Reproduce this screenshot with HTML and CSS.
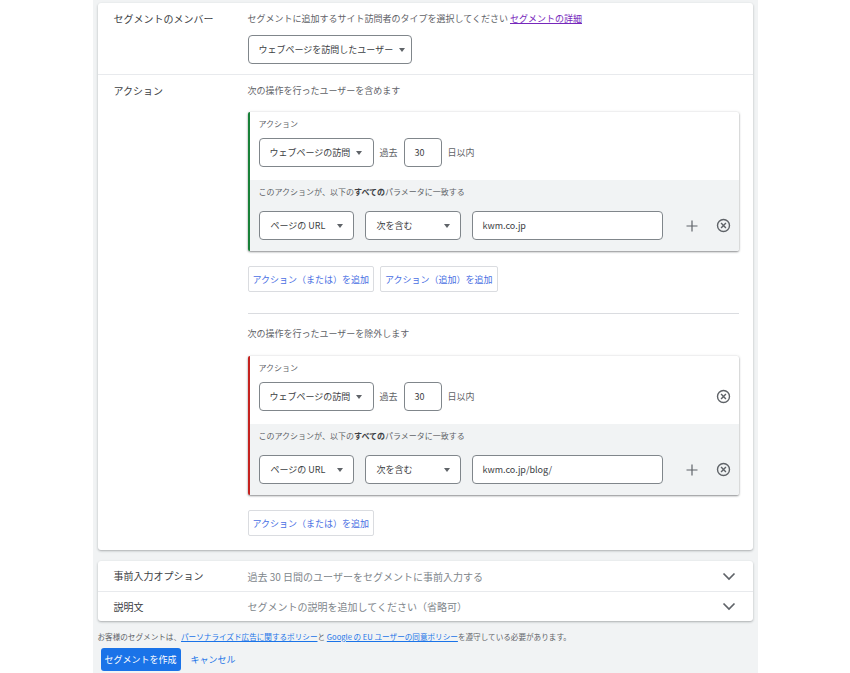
FILE: index.html
```html
<!DOCTYPE html>
<html>
<head>
<meta charset="utf-8">
<title>セグメントを作成</title>
<link rel="stylesheet" href="styles.css">
</head>
<body>
<div class="page">
    <div class="card main-card">
        <div class="section section-member">
            <div class="section-label">セグメントのメンバー</div>
            <div class="section-body">
                <div class="hint">セグメントに追加するサイト訪問者のタイプを選択してください <a class="link-visited" href="#">セグメントの詳細</a></div>
                <div class="dropdown dropdown-member">ウェブページを訪問したユーザー<span class="caret"></span></div>
            </div>
        </div>

        <div class="section section-actions">
            <div class="section-label">アクション</div>
            <div class="section-body">
                <div class="hint">次の操作を行ったユーザーを含めます</div>

                <div class="action-card include">
                    <div class="action-top">
                        <div class="mini-label">アクション</div>
                        <div class="action-row">
                            <div class="dropdown">ウェブページの訪問<span class="caret"></span></div>
                            <span class="inline-text">過去</span>
                            <div class="field field-days">30</div>
                            <span class="inline-text">日以内</span>
                        </div>
                    </div>
                    <div class="action-params">
                        <div class="mini-label">このアクションが、以下の<b>すべての</b>パラメータに一致する</div>
                        <div class="param-row">
                            <div class="dropdown select-param">ページの URL<span class="caret"></span></div>
                            <div class="dropdown select-match">次を含む<span class="caret"></span></div>
                            <div class="field field-value">kwm.co.jp</div>
                            <span class="icon-btn icon-plus">
                                <svg width="12" height="12" viewBox="0 0 12 12"><path d="M6 .5v11M.5 6h11" stroke="#5f6368" stroke-width="1.2" fill="none"/></svg>
                            </span>
                            <span class="icon-btn">
                                <svg width="15" height="15" viewBox="0 0 16 16"><circle cx="8" cy="8" r="6.4" fill="none" stroke="#5f6368" stroke-width="1.5"/><path d="M5.4 5.4l5.2 5.2M10.6 5.4l-5.2 5.2" stroke="#5f6368" stroke-width="1.5" fill="none"/></svg>
                            </span>
                        </div>
                    </div>
                </div>

                <div class="button-group">
                    <button class="btn-outline">アクション（または）を追加</button>
                    <button class="btn-outline">アクション（追加）を追加</button>
                </div>

                <div class="divider"></div>

                <div class="hint hint-exclude">次の操作を行ったユーザーを除外します</div>

                <div class="action-card exclude">
                    <div class="action-top">
                        <div class="mini-label">アクション</div>
                        <div class="action-row">
                            <div class="dropdown">ウェブページの訪問<span class="caret"></span></div>
                            <span class="inline-text">過去</span>
                            <div class="field field-days">30</div>
                            <span class="inline-text">日以内</span>
                            <span class="icon-btn icon-push">
                                <svg width="15" height="15" viewBox="0 0 16 16"><circle cx="8" cy="8" r="6.4" fill="none" stroke="#5f6368" stroke-width="1.5"/><path d="M5.4 5.4l5.2 5.2M10.6 5.4l-5.2 5.2" stroke="#5f6368" stroke-width="1.5" fill="none"/></svg>
                            </span>
                        </div>
                    </div>
                    <div class="action-params">
                        <div class="mini-label">このアクションが、以下の<b>すべての</b>パラメータに一致する</div>
                        <div class="param-row">
                            <div class="dropdown select-param">ページの URL<span class="caret"></span></div>
                            <div class="dropdown select-match">次を含む<span class="caret"></span></div>
                            <div class="field field-value">kwm.co.jp/blog/</div>
                            <span class="icon-btn icon-plus">
                                <svg width="12" height="12" viewBox="0 0 12 12"><path d="M6 .5v11M.5 6h11" stroke="#5f6368" stroke-width="1.2" fill="none"/></svg>
                            </span>
                            <span class="icon-btn">
                                <svg width="15" height="15" viewBox="0 0 16 16"><circle cx="8" cy="8" r="6.4" fill="none" stroke="#5f6368" stroke-width="1.5"/><path d="M5.4 5.4l5.2 5.2M10.6 5.4l-5.2 5.2" stroke="#5f6368" stroke-width="1.5" fill="none"/></svg>
                            </span>
                        </div>
                    </div>
                </div>

                <div class="button-group">
                    <button class="btn-outline">アクション（または）を追加</button>
                </div>
            </div>
        </div>
    </div>

    <div class="card options-card">
        <div class="collapse-row">
            <div class="section-label">事前入力オプション</div>
            <div class="collapse-text">過去 30 日間のユーザーをセグメントに事前入力する</div>
            <svg class="chevron" width="14" height="9" viewBox="0 0 14 9"><path d="M1.5 1.5L7 7l5.5-5.5" fill="none" stroke="#5f6368" stroke-width="1.7"/></svg>
        </div>
        <div class="collapse-row">
            <div class="section-label">説明文</div>
            <div class="collapse-text">セグメントの説明を追加してください（省略可）</div>
            <svg class="chevron" width="14" height="9" viewBox="0 0 14 9"><path d="M1.5 1.5L7 7l5.5-5.5" fill="none" stroke="#5f6368" stroke-width="1.7"/></svg>
        </div>
    </div>

    <div class="policy">お客様のセグメントは、<a href="#">パーソナライズド広告に関するポリシー</a>と <a href="#">Google の EU ユーザーの同意ポリシー</a>を遵守している必要があります。</div>

    <div class="footer-actions">
        <button class="btn-primary">セグメントを作成</button>
        <button class="btn-text">キャンセル</button>
    </div>
</div>
</body>
</html>
```

FILE: styles.css
```css
body {
    margin: 0;
    background-color: #fff;
    font-family: "Noto Sans CJK JP", "Noto Sans", sans-serif;
    color: #3c4043;
}

.page {
    width: 665px;
    min-height: 100vh;
    margin: 0 auto;
    padding: 3px 5px 0;
    box-sizing: border-box;
    background-color: #f1f3f4;
}

.card {
    background-color: #fff;
    border-radius: 3px;
    box-shadow: 0 1px 2px rgba(60, 64, 67, 0.3), 0 1px 3px rgba(60, 64, 67, 0.1);
}

.section {
    display: flex;
    padding: 9px 14px 10px 16px;
}

.section-member {
    border-bottom: 1px solid #e8eaed;
}

.section-actions {
    padding-bottom: 14px;
}

.section-label {
    width: 134px;
    flex-shrink: 0;
    font-size: 10px;
    line-height: 14px;
    color: #3c4043;
}

.section-body {
    flex: 1;
    min-width: 0;
}

.hint {
    font-size: 9px;
    line-height: 14px;
    color: #5f6368;
}

.link-visited {
    color: #7627bb;
    text-decoration: underline;
}

.hint-exclude {
    margin-top: 13px;
}

.dropdown {
    display: inline-flex;
    align-items: center;
    box-sizing: border-box;
    height: 29px;
    padding: 0 10px;
    border: 1px solid #80868b;
    border-radius: 4px;
    font-size: 9px;
    color: #3c4043;
    background-color: #fff;
    white-space: nowrap;
}

.dropdown-member {
    margin-top: 9px;
    width: 164px;
    padding-right: 7px;
}

.caret {
    display: inline-block;
    width: 0;
    height: 0;
    margin-left: 6px;
    border-left: 3.5px solid transparent;
    border-right: 3.5px solid transparent;
    border-top: 4px solid #5f6368;
}

.action-card {
    margin-top: 14px;
    border-left: 2px solid #188038;
    border-radius: 2px;
    background-color: #fff;
    box-shadow: 0 1px 2px rgba(60, 64, 67, 0.55), 0 0 3px rgba(60, 64, 67, 0.15);
    overflow: hidden;
}

.action-card.exclude {
    margin-top: 15px;
    border-left-color: #c5221f;
}

.action-top {
    padding: 6px 3px 13px 9px;
}

.action-params {
    padding: 6px 3px 11px 9px;
    background-color: #f1f3f4;
}

.mini-label {
    font-size: 8px;
    line-height: 12px;
    color: #5f6368;
}

.mini-label b {
    color: #3c4043;
}

.action-row,
.param-row {
    display: flex;
    align-items: center;
}

.action-row {
    margin-top: 8px;
}

.param-row {
    margin-top: 13px;
}

.action-row .dropdown {
    width: 115px;
}

.inline-text {
    margin: 0 6px;
    font-size: 9px;
    color: #5f6368;
}

.field {
    display: flex;
    align-items: center;
    box-sizing: border-box;
    height: 29px;
    padding: 0 10px;
    border: 1px solid #80868b;
    border-radius: 4px;
    font-size: 9px;
    color: #3c4043;
    background-color: #fff;
}

.field-days {
    width: 38px;
}

.select-param,
.select-match {
    justify-content: space-between;
    padding-left: 11px;
}

.select-param {
    width: 95px;
}

.select-match {
    width: 96px;
    margin-left: 11px;
}

.field-value {
    width: 191px;
    margin-left: 11px;
}

.icon-btn {
    display: flex;
    align-items: center;
    justify-content: center;
    width: 24px;
    height: 24px;
}

.icon-plus {
    margin-left: 17px;
    margin-right: 8px;
}

.icon-push {
    margin-left: auto;
}

.button-group {
    display: flex;
    gap: 6px;
    margin-top: 15px;
}

.btn-outline {
    height: 26px;
    padding: 0 4px;
    border: 1px solid #dadce0;
    border-radius: 2px;
    background-color: #fff;
    font-family: inherit;
    font-size: 9px;
    color: #4a6fe3;
}

.divider {
    margin-top: 21px;
    height: 1px;
    background-color: #dadce0;
}

.options-card {
    margin-top: 11px;
}

.collapse-row {
    display: flex;
    align-items: center;
    height: 30px;
    padding: 0 17px 0 16px;
}

.collapse-row + .collapse-row {
    border-top: 1px solid #e8eaed;
    height: 29px;
}

.collapse-text {
    flex: 1;
    font-size: 10px;
    color: #80868b;
}

.policy {
    margin-top: 10px;
    font-size: 7.6px;
    line-height: 11px;
    color: #5f6368;
}

.policy a {
    color: #1a73e8;
    text-decoration: underline;
}

.footer-actions {
    display: flex;
    align-items: center;
    gap: 6px;
    margin-top: 6px;
    margin-left: 3px;
}

.btn-primary {
    height: 23px;
    width: 80px;
    padding: 0;
    border: none;
    border-radius: 3px;
    background-color: #1a73e8;
    color: #fff;
    font-family: inherit;
    font-size: 9px;
}

.btn-text {
    padding: 0 4px;
    border: none;
    background: none;
    font-family: inherit;
    font-size: 9px;
    color: #1a73e8;
}
```
